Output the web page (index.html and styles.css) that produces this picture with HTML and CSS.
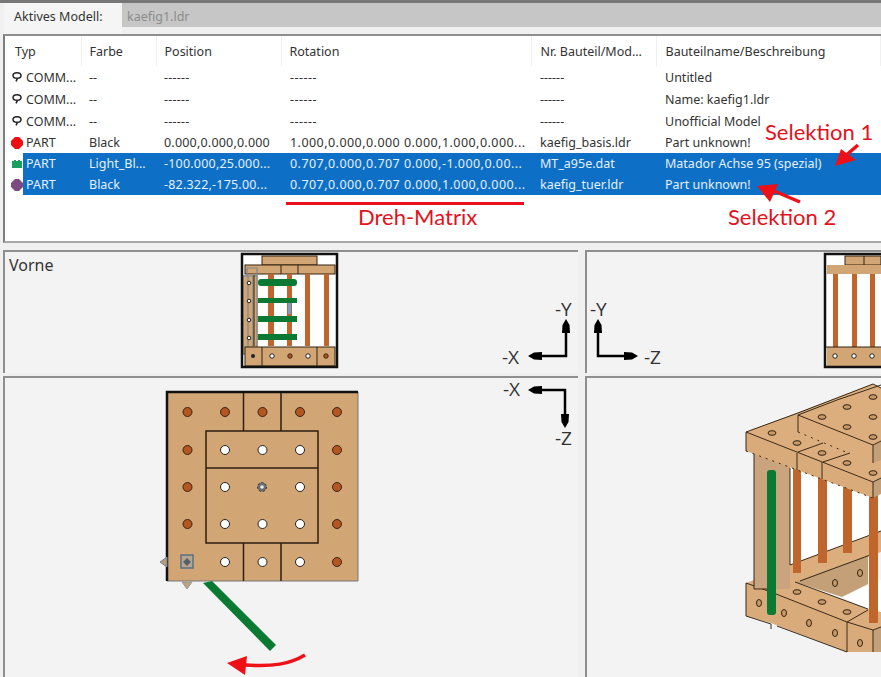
FILE: index.html
```html
<!DOCTYPE html>
<html lang="de">
<head>
    <meta charset="UTF-8">
    <title>Aktives Modell</title>
    <link rel="stylesheet" href="styles.css">
</head>
<body>
<div class="window">
    <div class="model-bar">
        <div class="model-tab">Aktives Modell:</div>
        <div class="model-file">kaefig1.ldr</div>
    </div>

    <div class="part-list">
        <table>
            <colgroup>
                <col class="col-type"><col class="col-color"><col class="col-pos">
                <col class="col-rot"><col class="col-nr"><col class="col-name">
            </colgroup>
            <thead>
                <tr>
                    <th>Typ</th><th>Farbe</th><th>Position</th><th>Rotation</th>
                    <th>Nr. Bauteil/Mod...</th><th>Bauteilname/Beschreibung</th>
                </tr>
            </thead>
            <tbody>
                <tr>
                    <td><div class="type-cell"><svg class="row-icon" viewBox="0 0 12 12"><path class="icon-comment" d="M2 4.500a4 2.800 0 1 1 8 0a4 2.800 0 0 1-8 0M6.500 7.300l-1.500 3"/></svg><span>COMM...</span></div></td>
                    <td>--</td><td>------</td><td>------</td><td>------</td><td>Untitled</td>
                </tr>
                <tr>
                    <td><div class="type-cell"><svg class="row-icon" viewBox="0 0 12 12"><path class="icon-comment" d="M2 4.500a4 2.800 0 1 1 8 0a4 2.800 0 0 1-8 0M6.500 7.300l-1.500 3"/></svg><span>COMM...</span></div></td>
                    <td>--</td><td>------</td><td>------</td><td>------</td><td>Name: kaefig1.ldr</td>
                </tr>
                <tr>
                    <td><div class="type-cell"><svg class="row-icon" viewBox="0 0 12 12"><path class="icon-comment" d="M2 4.500a4 2.800 0 1 1 8 0a4 2.800 0 0 1-8 0M6.500 7.300l-1.500 3"/></svg><span>COMM...</span></div></td>
                    <td>--</td><td>------</td><td>------</td><td>------</td><td>Unofficial Model</td>
                </tr>
                <tr class="part-row">
                    <td><div class="type-cell"><svg class="row-icon" viewBox="0 0 12 12"><polygon fill="#f00d12" points="4,0 8,0 12,4 12,8 8,12 4,12 0,8 0,4"/></svg><span>PART</span></div></td>
                    <td>Black</td><td>0.000,0.000,0.000</td><td>1.000,0.000,0.000 0.000,1.000,0.000...</td><td>kaefig_basis.ldr</td><td>Part unknown!</td>
                </tr>
                <tr class="part-row selected">
                    <td><div class="type-cell"><svg class="row-icon" viewBox="0 0 12 12"><path fill="#17a060" d="M1 3h2v-1h2v1h2v-1h2v1h2v7h-10z"/></svg><span>PART</span></div></td>
                    <td>Light_Bl...</td><td>-100.000,25.000...</td><td>0.707,0.000,0.707 0.000,-1.000,0.00...</td><td>MT_a95e.dat</td><td>Matador Achse 95 (spezial)</td>
                </tr>
                <tr class="part-row selected">
                    <td><div class="type-cell"><svg class="row-icon" viewBox="0 0 12 12"><polygon fill="#7d4a80" points="4,0 8,0 12,4 12,8 8,12 4,12 0,8 0,4"/></svg><span>PART</span></div></td>
                    <td>Black</td><td>-82.322,-175.00...</td><td>0.707,0.000,0.707 0.000,1.000,0.000...</td><td>kaefig_tuer.ldr</td><td>Part unknown!</td>
                </tr>
            </tbody>
        </table>
    </div>

    <div class="views">
        <!-- all view svgs use page coordinates in their viewBox -->
        <div class="view">
            <div class="view-title">Vorne</div>
            <svg class="drawing" viewBox="3 250 575 123">
                <rect x="242" y="255" width="94" height="111" fill="#fff"/>
                <rect x="262" y="256" width="55" height="9" class="tan thin"/>
                <rect x="245" y="265" width="90" height="9" class="tan thin"/>
                <path class="thin" d="M281 265v9M298 265v9"/>
                <rect x="268" y="274" width="6" height="72" class="post"/>
                <rect x="287" y="274" width="5" height="72" class="post"/>
                <rect x="305" y="274" width="5" height="72" class="post"/>
                <rect x="324" y="274" width="5" height="72" class="post"/>
                <rect x="243" y="275" width="15" height="80" class="tan"/>
                <path class="door" d="M247 268h10v8h-10zM243 276h5v78h-5zM253 276h4v78h-4zM248 355h9v10h-9z"/>
                <circle cx="249" cy="283" r="1.800" class="hole-light"/>
                <circle cx="249" cy="301" r="1.800" class="hole-light"/>
                <circle cx="249" cy="320" r="1.800" class="hole-light"/>
                <circle cx="249" cy="338" r="1.800" class="hole-light"/>
                <rect x="258" y="279" width="39" height="7" rx="3" class="axle"/>
                <rect x="258" y="298" width="39" height="5" class="axle"/>
                <rect x="258" y="316" width="39" height="6" class="axle"/>
                <rect x="258" y="334" width="39" height="6" class="axle"/>
                <rect x="288" y="303" width="3" height="11" fill="#6f9fd0"/>
                <rect x="245" y="347" width="90" height="19" class="tan thin"/>
                <path class="thin" d="M262 347v19M317 347v19M254 346v-71"/>
                <circle cx="253" cy="356" r="2" fill="#222"/>
                <circle cx="272" cy="356" r="2.200" class="hole-light"/>
                <circle cx="290" cy="356" r="2.200" class="hole-dark"/>
                <circle cx="308" cy="356" r="2.200" class="hole-light"/>
                <circle cx="326" cy="356" r="2.200" class="hole-dark"/>
                <path class="frame" d="M242 367v-113h95v113zM242 355v12"/>
                <path class="axis" d="M566 325v31h-28"/>
                <path class="head" d="M566 319l3.500 6 .500 8h-8l.500-8zM528 356l6-3.500 8-.500v8l-8-.500z"/>
                <text x="555" y="316" class="axis-label">-Y</text>
                <text x="502" y="364" class="axis-label">-X</text>
            </svg>
        </div>

        <div class="view">
            <svg class="drawing" viewBox="585 250 296 123">
                <rect x="825" y="255" width="56" height="111" fill="#fff"/>
                <rect x="845" y="256" width="36" height="9" class="tan thin"/>
                <path class="thin" d="M864 256v9"/>
                <rect x="827" y="265" width="54" height="9" class="tan"/>
                <rect x="833" y="274" width="5" height="73" class="post"/>
                <rect x="852" y="274" width="5" height="73" class="post"/>
                <rect x="870" y="274" width="5" height="73" class="post"/>
                <rect x="827" y="347" width="54" height="19" class="tan"/>
                <path class="thin" d="M826 347h55"/>
                <circle cx="835" cy="356" r="2.200" class="hole-light"/>
                <circle cx="854" cy="356" r="2.200" class="hole-light"/>
                <circle cx="872" cy="356" r="2.200" class="hole-light"/>
                <path class="frame" d="M881 254h-56v113h56"/>
                <path class="axis" d="M598 325v31h28"/>
                <path class="head" d="M598 319l3.500 6 .500 8h-8l.500-8zM638 356l-6-3.500-8-.500v8l8-.500z"/>
                <text x="590" y="316" class="axis-label">-Y</text>
                <text x="644" y="364" class="axis-label">-Z</text>
            </svg>
        </div>

        <div class="view">
            <svg class="drawing" viewBox="3 376 575 301">
                <rect x="167" y="392" width="191" height="189" class="tan"/>
                <path class="frame-thin" d="M358 392v189h-191"/>
                <path class="frame" d="M167 581v-189h191"/>
                <path class="seam" d="M243.500 393v38M281 393v38M206 431h112v112h-112zM206 468h112M243.500 543v38M281 543v38"/>
                <g class="hole-dark big">
                    <circle cx="187.500" cy="412" r="4.500"/><circle cx="225" cy="412" r="4.500"/><circle cx="262.500" cy="412" r="4.500"/><circle cx="300" cy="412" r="4.500"/><circle cx="337" cy="412" r="4.500"/>
                    <circle cx="187.500" cy="450" r="4.500"/><circle cx="337" cy="450" r="4.500"/>
                    <circle cx="187.500" cy="487" r="4.500"/><circle cx="337" cy="487" r="4.500"/>
                    <circle cx="187.500" cy="524" r="4.500"/><circle cx="337" cy="524" r="4.500"/>
                    <circle cx="337" cy="562" r="4.500"/>
                </g>
                <g class="hole-light big">
                    <circle cx="225" cy="450" r="4.500"/><circle cx="262.500" cy="450" r="4.500"/><circle cx="300" cy="450" r="4.500"/>
                    <circle cx="225" cy="487" r="4.500"/><circle cx="300" cy="487" r="4.500"/>
                    <circle cx="225" cy="524" r="4.500"/><circle cx="262.500" cy="524" r="4.500"/><circle cx="300" cy="524" r="4.500"/>
                    <circle cx="225" cy="562" r="4.500"/><circle cx="262.500" cy="562" r="4.500"/><circle cx="300" cy="562" r="4.500"/>
                </g>
                <circle cx="262" cy="487" r="4.500" fill="#6d6d70" stroke="#333" stroke-dasharray="2 2"/>
                <circle cx="262" cy="487" r="1.800" fill="#eee"/>
                <rect x="181" y="555" width="12" height="13" fill="#b9a48e" stroke="#5a7186" stroke-width="1.500"/>
                <polygon points="187,558 191,562 187,566 183,562" fill="#55606a"/>
                <polygon points="160,562 167,557 167,567" fill="#b89a78" stroke="#6f8298"/>
                <polygon points="182,582 192,582 187,589" fill="#c0a27e" stroke="#999"/>
                <polygon points="203,583 212,581 276,645 270,651" class="axle"/>
                <path class="axis" d="M538 390h27v28"/>
                <path class="head" d="M528 390l6-3.500 8-.500v8l-8-.500zM565 428l-3.500-6-.500-8h8l-.500 8z"/>
                <text x="503" y="396" class="axis-label">-X</text>
                <text x="555" y="445" class="axis-label">-Z</text>
            </svg>
        </div>

        <div class="view">
            <svg class="drawing" viewBox="585 376 296 301">
                <!-- cage interior -->
                <polygon points="790,455 881,490 881,533 790,566" fill="#fff"/>
                <polygon points="842,597 881,580 881,612 868,609" fill="#fff"/>
                <polygon points="790,565 881,531 881,552 800,581 790,584" class="iso-top"/>
                <polygon points="795,582 868,555 868,584 842,597" class="iso-dark"/>
                <path class="edge" d="M790 565l91-34M800 581l73-27"/>
                <!-- bottom plate -->
                <polygon points="746,583 754,580 795,582 868,609 881,612 881,627 873,630 847,622 771,593" class="iso-top"/>
                <polygon points="746,583 771,592 771,623 746,616" class="iso-face"/>
                <polygon points="771,592 847,622 847,652 771,623" class="iso-face"/>
                <polygon points="847,622 873,630 873,652 847,652" class="iso-face"/>
                <polygon points="873,630 881,627 881,652 873,652" class="iso-dark"/>
                <path class="edge" d="M746 583l25 9 76 30 26 8 8-3M746 583v33l25 8M771 624v5M777 626l70 26M847 622v30M873 630v22M795 582l73 27M847 622l21-12"/>
                <ellipse cx="797" cy="592" rx="4" ry="2.300" class="iso-hole"/>
                <ellipse cx="822" cy="602" rx="4" ry="2.300" class="iso-hole"/>
                <ellipse cx="847" cy="612" rx="4" ry="2.300" class="iso-hole"/>
                <ellipse cx="759" cy="603" rx="2.500" ry="3.500" class="iso-hole"/>
                <ellipse cx="784" cy="613" rx="2.500" ry="3.500" class="iso-hole"/>
                <ellipse cx="809" cy="623" rx="2.500" ry="3.500" class="iso-hole"/>
                <ellipse cx="835" cy="633" rx="2.500" ry="3.500" class="iso-hole"/>
                <ellipse cx="860" cy="643" rx="2.500" ry="3.500" class="iso-hole"/>
                <ellipse cx="860" cy="573" rx="2.500" ry="3.500" class="iso-hole"/>
                <ellipse cx="835" cy="583" rx="2.500" ry="3.500" class="iso-hole"/>
                <!-- door and posts -->
                <rect x="754" y="452" width="36" height="137" fill="#c9a47e"/>
                <path class="edge" d="M754 452v137h13M790 468v97"/>
                <rect x="793" y="460" width="8" height="113" class="post"/>
                <rect x="818" y="470" width="9" height="93" class="post"/>
                <rect x="843" y="480" width="9" height="73" class="post"/>
                <rect x="869" y="490" width="9" height="133" class="post"/>
                <rect x="767" y="470" width="9" height="145" rx="3" class="axle"/>
                <!-- top plate with raised block -->
                <polygon points="746,432 873,384 881,388 881,478 873,482" class="iso-top"/>
                <polygon points="746,432 873,482 873,498 746,451" class="iso-face"/>
                <polygon points="873,482 881,478 881,494 873,498" class="iso-dark"/>
                <polygon points="873,445 881,441 881,460 873,463" class="iso-dark"/>
                <path class="edge" d="M746 432l52-19 75-29 8 4M746 432l127 50 8-4M746 432v19M798 415l75 30 8-4M798 415l39-15 44-15M798 415v17M873 445v18M798 452l25-9M823 462l27-9M797 453v17M822 462v17M873 482v16"/>
                <path class="edge dotted" d="M746 451l127 47M798 432l50 21"/>
                <ellipse cx="772" cy="433" rx="4" ry="2.300" class="iso-hole"/>
                <ellipse cx="797" cy="443" rx="4" ry="2.300" class="iso-hole"/>
                <ellipse cx="822" cy="453" rx="4" ry="2.300" class="iso-hole"/>
                <ellipse cx="847" cy="463" rx="4" ry="2.300" class="iso-hole"/>
                <ellipse cx="873" cy="473" rx="4" ry="2.300" class="iso-hole"/>
                <ellipse cx="822" cy="417" rx="4" ry="2.300" class="iso-hole"/>
                <ellipse cx="847" cy="407" rx="4" ry="2.300" class="iso-hole"/>
                <ellipse cx="873" cy="397" rx="4" ry="2.300" class="iso-hole"/>
                <ellipse cx="873" cy="417" rx="4" ry="2.300" class="iso-hole"/>
                <ellipse cx="847" cy="427" rx="4" ry="2.300" class="iso-hole"/>
                <ellipse cx="873" cy="437" rx="4" ry="2.300" class="iso-hole"/>
            </svg>
        </div>
    </div>

    <!-- red notes drawn over the screenshot -->
    <svg class="notes" viewBox="0 0 881 677">
        <path class="note-line" d="M286 203.500h238"/>
        <path class="note-arrow" d="M858 145l-14 12"/>
        <polygon class="note-fill" points="835,166 841,149 856,160"/>
        <path class="note-arrow" d="M800 202l-26-11"/>
        <polygon class="note-fill" points="757,186 778,184 770,202"/>
        <path class="note-curve" d="M305 655c-15 9-32 12-60 10"/>
        <polygon class="note-fill" points="227,663 247,656 245,675"/>
    </svg>
    <div class="note note-sel1">Selektion 1</div>
    <div class="note note-sel2">Selektion 2</div>
    <div class="note note-matrix">Dreh-Matrix</div>
</div>
</body>
</html>
```

FILE: styles.css
```css
body {
    margin: 0;
    background: #f0f0f0;
}

.window {
    position: relative;
    width: 881px;
    height: 677px;
    overflow: hidden;
    background: #f0f0f0;
    font-family: "Noto Sans", sans-serif;
    font-size: 12.5px;
    color: #333;
}

.model-bar {
    display: flex;
    height: 31px;
    border-top: 3px solid #777;
    box-sizing: content-box;
}

.model-tab {
    width: 118px;
    padding: 5px 0 0 10px;
    margin-left: 4px;
    box-sizing: border-box;
    background: #f5f5f5;
}

.model-file {
    flex: 1;
    height: 24px;
    padding: 5px 0 0 5px;
    box-sizing: border-box;
    background: #c6c6c6;
    color: #8c8c8c;
}

.part-list {
    height: 209px;
    margin-left: 3px;
    box-sizing: border-box;
    background: #fff;
    border-top: 2px solid #8f8f8f;
    border-left: 2px solid #7f7f7f;
    border-bottom: 2px solid #a8a8a8;
}

table {
    width: 876px;
    table-layout: fixed;
    border-collapse: collapse;
}

.col-type { width: 76px; }
.col-color { width: 75px; }
.col-pos { width: 125px; }
.col-rot { width: 250px; }
.col-nr { width: 125px; }

th {
    height: 30px;
    padding: 0 0 0 8px;
    font-weight: normal;
    text-align: left;
    border-right: 1px solid #f0f0f0;
}

th:first-child {
    padding-left: 10px;
}

th:nth-child(n+5) {
    padding-left: 9px;
}

td {
    height: 22px;
    padding: 0 0 0 8px;
    white-space: nowrap;
    overflow: hidden;
}

td:nth-child(3) {
    letter-spacing: 0.2px;
}

td:nth-child(4) {
    letter-spacing: 0.45px;
}

td:nth-child(n+4) {
    padding-left: 9px;
}

.part-row td {
    height: 21px;
}

.selected td {
    background: #0e6fc6;
    color: #e4f0fb;
}

.selected td:first-child {
    background: none;
}

td:first-child {
    padding: 0;
}

.type-cell {
    display: flex;
    align-items: center;
    height: 100%;
    padding-left: 6px;
    box-sizing: border-box;
}

.type-cell span {
    flex: 1;
    height: 21px;
    line-height: 21px;
    padding-left: 3px;
}

.selected .type-cell span {
    background: #0e6fc6;
}

.row-icon {
    width: 12px;
    height: 12px;
    flex-shrink: 0;
}

.icon-comment {
    fill: none;
    stroke: #222;
    stroke-width: 1.500;
}

.views {
    display: grid;
    grid-template-columns: 575px 296px;
    grid-template-rows: 123px 301px;
    column-gap: 7px;
    row-gap: 3px;
    margin: 7px 0 0 3px;
}

.view {
    position: relative;
    box-sizing: border-box;
    background: #f3f3f4;
    border-top: 2px solid #8f8f8f;
    border-left: 2px solid #8f8f8f;
}

.view-title {
    position: absolute;
    left: 4px;
    top: 2px;
    font-size: 16px;
}

.drawing {
    position: absolute;
    left: -2px;
    top: -2px;
    width: calc(100% + 2px);
    height: calc(100% + 2px);
}

.tan { fill: #d2a574; }
.thin { stroke: #332211; stroke-width: 1; }
path.thin { fill: none; }
.post { fill: #c0652c; }
.axle { fill: #0a7a32; }
.door { fill: none; stroke: #7d8894; stroke-width: 1.200; }
.frame { fill: none; stroke: #111; stroke-width: 2.500; }
.frame-thin { fill: none; stroke: #777; stroke-width: 1; }
.seam { fill: none; stroke: #2e1e10; stroke-width: 1.500; }

.hole-light { fill: #fff; stroke: #222; stroke-width: 1; }
.hole-dark { fill: #b4561f; stroke: #3a2515; stroke-width: 1; }

.axis { fill: none; stroke: #000; stroke-width: 2.500; }
.head { fill: #000; }

.axis-label {
    font-family: "Open Sans", sans-serif;
    font-size: 19px;
    fill: #333;
}

.iso-top { fill: #dcae7e; }
.iso-face { fill: #daab7a; }
.iso-dark { fill: #c4a078; }
.iso-hole { fill: #c99a68; stroke: #2e2215; stroke-width: 1; }
.edge { fill: none; stroke: #3a2a18; stroke-width: 1; }
.dotted { stroke-dasharray: 2 5; }

.notes {
    position: absolute;
    left: 0;
    top: 0;
    width: 881px;
    height: 677px;
    pointer-events: none;
}

.note-line { fill: none; stroke: #e8101a; stroke-width: 3; }
.note-arrow { fill: none; stroke: #ee0f17; stroke-width: 3.500; }
.note-curve { fill: none; stroke: #f01018; stroke-width: 3.500; }
.note-fill { fill: #ee0f17; }

.note {
    position: absolute;
    font-family: "Lato", sans-serif;
    font-size: 22px;
    line-height: 24px;
    color: #e3121c;
}

.note-sel1 { left: 765px; top: 120px; }
.note-sel2 { left: 728px; top: 205px; }
.note-matrix { left: 358px; top: 205px; }
```
